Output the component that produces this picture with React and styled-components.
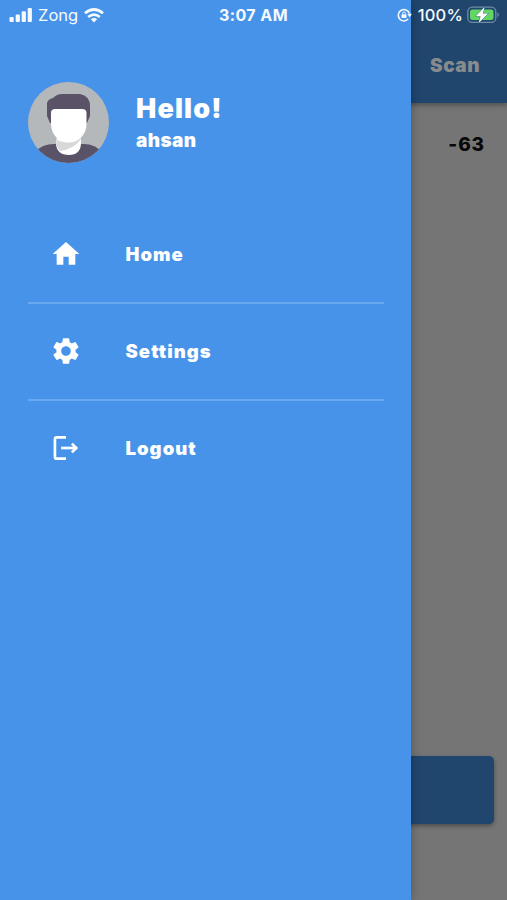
import React from 'react';
import styled, { createGlobalStyle } from 'styled-components';
import { MdHome, MdSettings } from 'react-icons/md';

const GlobalStyle = createGlobalStyle`
  * {
    box-sizing: border-box;
  }
  body {
    margin: 0;
    font-family: Inter, "Liberation Sans", sans-serif;
  }
`;

const Screen = styled.div`
  position: relative;
  width: 507px;
  height: 900px;
  overflow: hidden;
  background: #757575;
`;

const Page = styled.div`
  display: flex;
  flex-direction: column;
  height: 100%;
`;

const Header = styled.header`
  display: flex;
  flex: none;
  justify-content: flex-end;
  align-items: flex-end;
  height: 103px;
  padding: 0 27px 25px 0;
  background: #20466e;
  box-shadow: 0 2px 5px rgba(0, 0, 0, 0.35);
`;

const HeaderAction = styled.span`
  color: #878b8e;
  font-size: 19px;
  line-height: 24px;
  font-weight: 900;
  letter-spacing: 0.5px;
`;

const Signal = styled.div`
  flex: 1;
  padding: 30px 22px 0 0;
  text-align: right;
  color: #080808;
  font-size: 19px;
  line-height: 24px;
  font-weight: 800;
  letter-spacing: 0.9px;
`;

const BottomButton = styled.div`
  height: 68px;
  margin: 0 13px 76px;
  border-radius: 5px;
  background: #20466e;
  box-shadow: 0 2px 4px rgba(0, 0, 0, 0.35);
`;

const Drawer = styled.aside`
  position: absolute;
  top: 0;
  left: 0;
  width: 411px;
  height: 100%;
  padding: 82px 27px 0 28px;
  background: #4893ea;
  box-shadow: 0 0 10px rgba(0, 0, 0, 0.3);
`;

const Profile = styled.div`
  display: flex;
  gap: 27px;
  height: 125px;
`;

const Names = styled.div`
  padding-top: 10px;
  color: #fff;
`;

const Greeting = styled.div`
  font-size: 27px;
  line-height: 34px;
  font-weight: 900;
  letter-spacing: 1.15px;
`;

const UserName = styled.div`
  margin-top: 3px;
  font-size: 19px;
  line-height: 24px;
  font-weight: 900;
  letter-spacing: 0.4px;
`;

const MenuItem = styled.div`
  display: flex;
  align-items: center;
  gap: 43.5px;
  height: 97px;
  padding-left: 22px;
  border-bottom: 2px solid ${props => props.$last ? 'transparent' : '#69a9f0'};
  color: #fff;
  font-size: 18.5px;
  line-height: 25px;
  font-weight: 900;
  letter-spacing: 1.05px;

  svg {
    margin-bottom: 1px;
  }
`;

const StatusBar = styled.div`
  position: absolute;
  top: 0;
  left: 0;
  display: grid;
  grid-template-columns: 1fr auto 1fr;
  align-items: center;
  width: 100%;
  height: 30px;
  padding: 0 7px 0 9px;
  color: #f5faff;
  font-size: 16.5px;
`;

const StatusGroup = styled.div`
  display: flex;
  align-items: center;
  justify-content: ${props => props.$end ? 'flex-end' : 'flex-start'};
  gap: 6px;
`;

const Time = styled.span`
  margin-right: 2px;
  font-size: 16px;
  font-weight: 700;
  letter-spacing: 0.45px;
`;

const Percent = styled.span`
  margin-right: -2px;
  font-weight: 500;
  letter-spacing: 0.2px;
`;

function LogoutIcon({ size }) {
  return (
    <svg width={size} height={size} viewBox="0 0 24 24" fill="none" stroke="currentColor" strokeWidth="2">
      <path d="M12 4H5Q3.7 4 3.7 5.3V18.7Q3.7 20 5 20H12" />
      <path d="M8.3 12H19.8" />
      <path d="M16.4 8.7L19.7 12L16.4 15.3" />
    </svg>
  );
}

const menu = [
  { label: 'Home', Icon: MdHome },
  { label: 'Settings', Icon: MdSettings },
  { label: 'Logout', Icon: LogoutIcon },
];

function Avatar() {
  return (
    <svg width="81" height="81" viewBox="0 0 81 81">
      <clipPath id="avatar">
        <circle cx="40.5" cy="40.5" r="40.5" />
      </clipPath>
      <g clipPath="url(#avatar)">
        <rect width="81" height="81" fill="#b5b8bb" />
        <path d="M7 70Q14 62 26 62H56Q67 62 75 71V81H7Z" fill="#5a5368" />
        <path d="M29 54H53V62Q52 73 41 73Q29 73 28 62Z" fill="#fff" />
        <path d="M29 58Q43 64 53 54V57Q46 67 32 69Q29 66 28 62Z" fill="#d8d8da" />
        <path d="M22 41L19 34V21Q20 17 25 16Q29 12 34 12H52Q62 14 62 24V34L59 41Z" fill="#5a5368" />
        <path d="M23 31Q23 27 27 27H54Q58.5 27 58.5 31V42C58.5 53 50 60.5 40.7 60.5C31.5 60.5 23 53 23 42Z" fill="#fff" />
      </g>
    </svg>
  );
}

function SignalBars() {
  return (
    <svg width="23" height="15" viewBox="0 0 23 15" fill="currentColor">
      <rect x="0.5" y="9" width="4.2" height="5" rx="1" />
      <rect x="6.7" y="6.5" width="4.2" height="7.5" rx="1" />
      <rect x="12.7" y="3.2" width="4.2" height="10.8" rx="1" />
      <rect x="18.7" y="0" width="4.2" height="14" rx="1" />
    </svg>
  );
}

function Wifi() {
  return (
    <svg width="20" height="15" viewBox="0 0 20 15" fill="none" stroke="currentColor" strokeWidth="2.7">
      <path d="M1 5.3Q10-2.3 19 5.3" />
      <path d="M4.2 9Q10 4.3 15.8 9" />
      <path d="M6.8 11.3Q10 8.8 13.2 11.3L10 14.5Z" fill="currentColor" stroke="none" />
    </svg>
  );
}

function RotationLock() {
  return (
    <svg width="15" height="14" viewBox="0 0 15 14" fill="none" stroke="currentColor">
      <path d="M11.2 11.1A5.7 5.7 0 1 1 12.4 5.5" strokeWidth="1.5" />
      <path d="M10.3 5.8H15L12.6 9.2Z" fill="currentColor" stroke="none" />
      <rect x="4.5" y="6.2" width="5" height="3.7" rx="0.7" fill="currentColor" stroke="none" />
      <path d="M5.6 6.5V5.3a1.4 1.4 0 0 1 2.8 0V6.5" strokeWidth="0.9" />
    </svg>
  );
}

function Battery() {
  return (
    <svg width="33" height="18" viewBox="0 0 33 18">
      <rect x="0.8" y="1.2" width="28" height="15.2" rx="4.5" fill="none" stroke="#6f8ca5" strokeWidth="1.3" />
      <rect x="3" y="3.5" width="23.5" height="10.6" rx="2.5" fill="#62d665" />
      <path d="M30.4 6.2Q33.4 8.8 30.4 11.4Z" fill="#6f8ca5" />
      <path d="M17.6 1L8.7 10.2H13.6L11.6 17L21.3 7.6H15.9Z" fill="#fff" stroke="#2d6470" strokeWidth="1" strokeLinejoin="round" paintOrder="stroke" />
    </svg>
  );
}

function App() {
  return (
    <Screen>
      <GlobalStyle />
      <Page>
        <Header>
          <HeaderAction>Scan</HeaderAction>
        </Header>
        <Signal>-63</Signal>
        <BottomButton />
      </Page>
      <Drawer>
        <Profile>
          <Avatar />
          <Names>
            <Greeting>Hello!</Greeting>
            <UserName>ahsan</UserName>
          </Names>
        </Profile>
        {menu.map(({ label, Icon }, index) => (
          <MenuItem key={label} $last={index === menu.length - 1}>
            <Icon size={32} />
            <span>{label}</span>
          </MenuItem>
        ))}
      </Drawer>
      <StatusBar>
        <StatusGroup>
          <SignalBars />
          <span>Zong</span>
          <Wifi />
        </StatusGroup>
        <Time>3:07 AM</Time>
        <StatusGroup $end>
          <RotationLock />
          <Percent>100%</Percent>
          <Battery />
        </StatusGroup>
      </StatusBar>
    </Screen>
  );
}

export default App;
